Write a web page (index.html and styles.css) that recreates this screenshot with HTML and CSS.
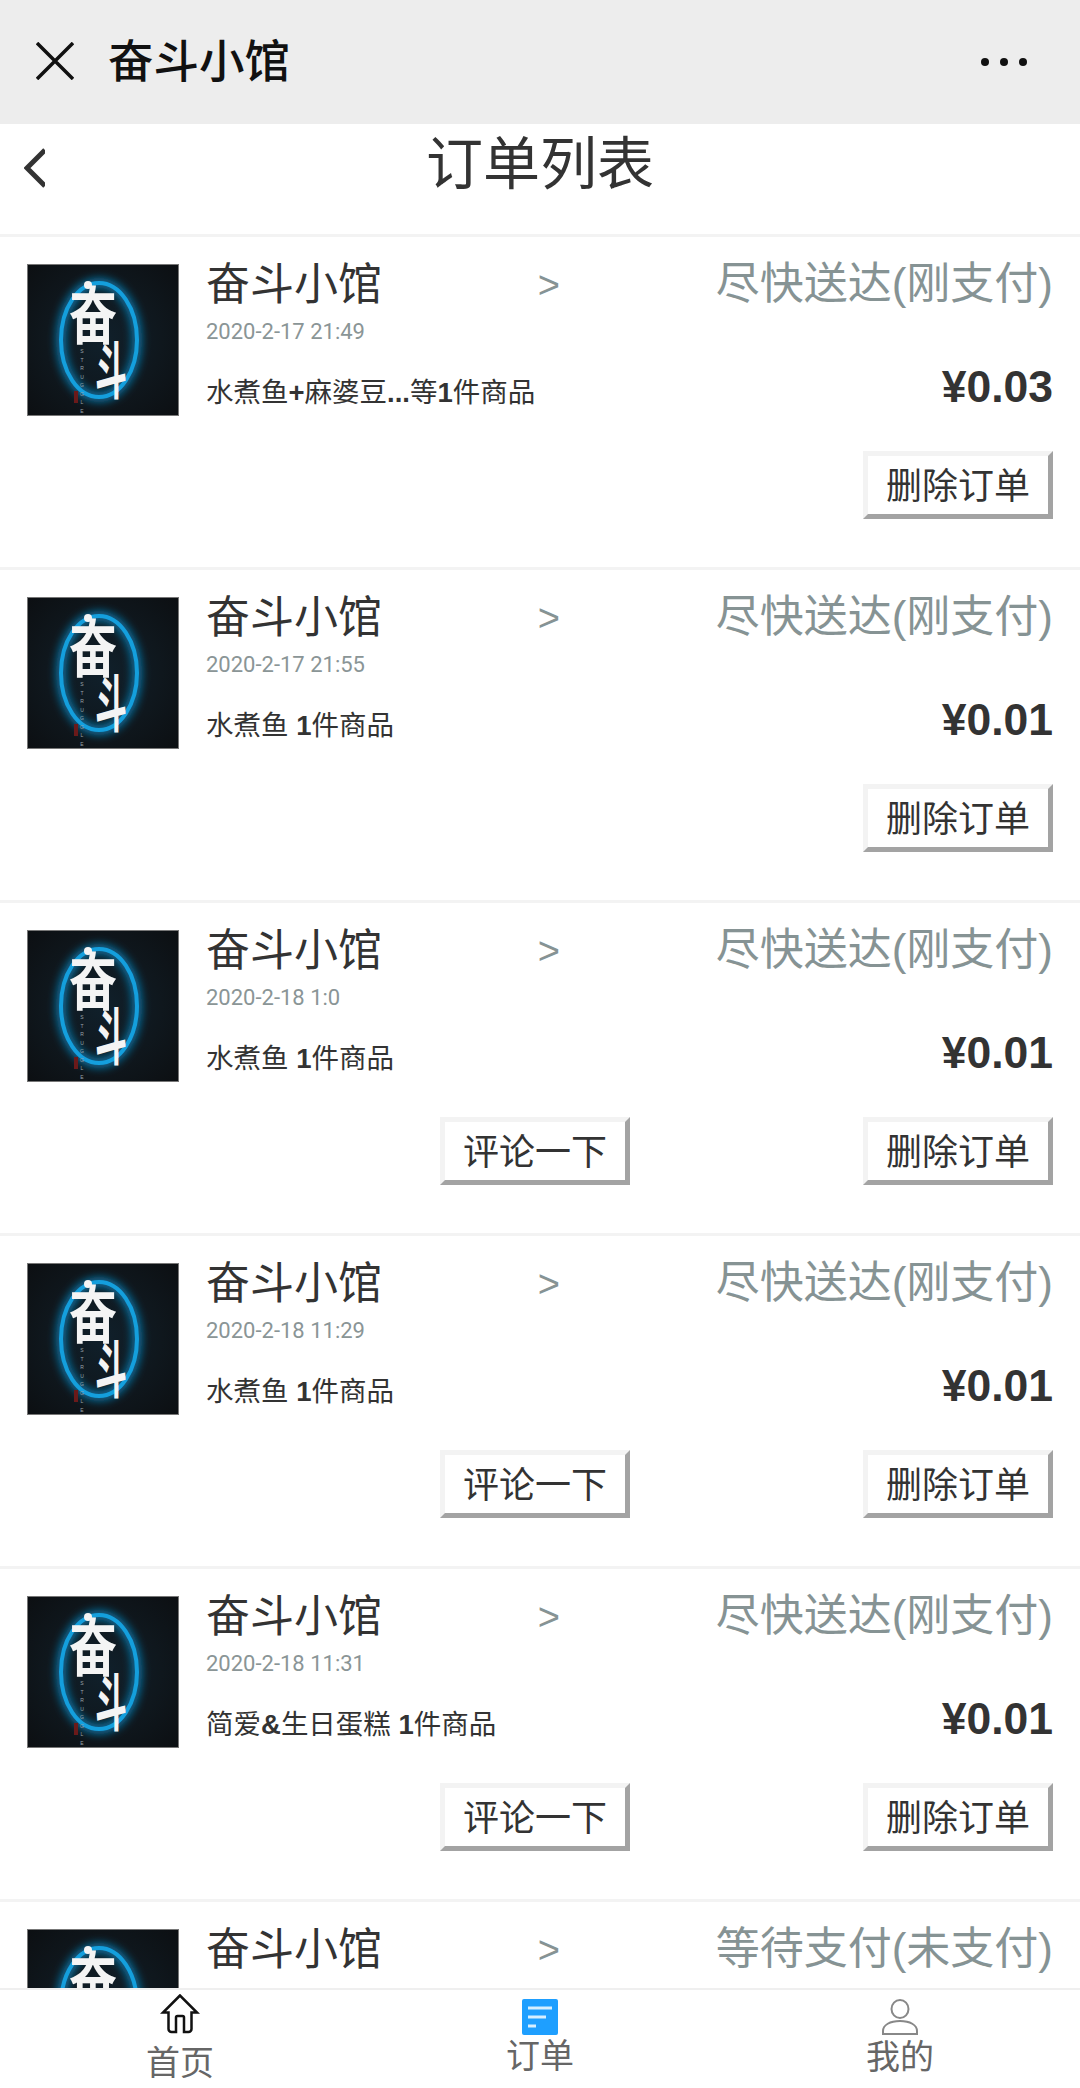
FILE: index.html
```html
<!DOCTYPE html>
<html lang="zh">
<head>
<meta charset="utf-8">
<title>订单列表</title>
<link rel="stylesheet" href="styles.css">
</head>
<body>
<svg class="defs" width="0" height="0" aria-hidden="true">
  <defs>
    <filter id="blur" x="-30%" y="-30%" width="160%" height="160%"><feGaussianBlur stdDeviation="4"/></filter>
    <radialGradient id="vignette" cx="50%" cy="50%" r="70%">
      <stop offset="0%" stop-color="#10202b"/>
      <stop offset="55%" stop-color="#0f171d"/>
      <stop offset="100%" stop-color="#0c0f12"/>
    </radialGradient>
    <symbol id="logo" viewBox="0 0 152 152">
      <rect width="152" height="152" fill="url(#vignette)"/>
      <ellipse cx="72" cy="76" rx="38" ry="57" fill="none" stroke="#0c6f9f" stroke-width="10" filter="url(#blur)"/>
      <ellipse cx="72" cy="76" rx="38" ry="57" fill="none" stroke="#149fdd" stroke-width="4"/>
      <circle cx="61" cy="21" r="4" fill="#f4f4f4"/>
      <text class="logo-a" transform="translate(66 75) scale(1 1.3)">奋</text>
      <text class="logo-b" transform="translate(84 130) scale(.66 1.3)">斗</text>
      <text class="logo-mini" x="55" y="84">STRUGGLE</text>
      <rect x="47" y="127" width="4" height="12" fill="#6a1a1a"/>
    </symbol>
  </defs>
</svg>
<div class="app">
  <header class="topbar">
    <svg class="close" viewBox="0 0 38 38"><path d="M1 1 37 37M37 1 1 37"/></svg>
    <span class="topbar-title">奋斗小馆</span>
    <span class="dots"><i></i><i></i><i></i></span>
  </header>
  <div class="pagehead">
    <svg class="back" viewBox="0 0 21 42"><path d="M21 3 3 21 21 39"/></svg>
    <h1>订单列表</h1>
  </div>
  <main class="list">
    <article class="card">
      <div class="row">
        <svg class="thumb"><use href="#logo"/></svg>
        <div class="info">
          <div class="name"><span>奋斗小馆</span><span class="gt">&gt;</span></div>
          <div class="date">2020-2-17 21:49</div>
          <div class="items">水煮鱼<b>+</b>麻婆豆<b>...</b>等<b>1</b>件商品</div>
        </div>
        <div class="side">
          <div class="status">尽快送达(刚支付)</div>
          <div class="price">¥0.03</div>
        </div>
      </div>
      <div class="actions"><button class="btn">删除订单</button></div>
    </article>
    <article class="card">
      <div class="row">
        <svg class="thumb"><use href="#logo"/></svg>
        <div class="info">
          <div class="name"><span>奋斗小馆</span><span class="gt">&gt;</span></div>
          <div class="date">2020-2-17 21:55</div>
          <div class="items">水煮鱼 <b>1</b>件商品</div>
        </div>
        <div class="side">
          <div class="status">尽快送达(刚支付)</div>
          <div class="price">¥0.01</div>
        </div>
      </div>
      <div class="actions"><button class="btn">删除订单</button></div>
    </article>
    <article class="card">
      <div class="row">
        <svg class="thumb"><use href="#logo"/></svg>
        <div class="info">
          <div class="name"><span>奋斗小馆</span><span class="gt">&gt;</span></div>
          <div class="date">2020-2-18 1:0</div>
          <div class="items">水煮鱼 <b>1</b>件商品</div>
        </div>
        <div class="side">
          <div class="status">尽快送达(刚支付)</div>
          <div class="price">¥0.01</div>
        </div>
      </div>
      <div class="actions"><button class="btn">评论一下</button><button class="btn">删除订单</button></div>
    </article>
    <article class="card">
      <div class="row">
        <svg class="thumb"><use href="#logo"/></svg>
        <div class="info">
          <div class="name"><span>奋斗小馆</span><span class="gt">&gt;</span></div>
          <div class="date">2020-2-18 11:29</div>
          <div class="items">水煮鱼 <b>1</b>件商品</div>
        </div>
        <div class="side">
          <div class="status">尽快送达(刚支付)</div>
          <div class="price">¥0.01</div>
        </div>
      </div>
      <div class="actions"><button class="btn">评论一下</button><button class="btn">删除订单</button></div>
    </article>
    <article class="card">
      <div class="row">
        <svg class="thumb"><use href="#logo"/></svg>
        <div class="info">
          <div class="name"><span>奋斗小馆</span><span class="gt">&gt;</span></div>
          <div class="date">2020-2-18 11:31</div>
          <div class="items">简爱<b>&amp;</b>生日蛋糕 <b>1</b>件商品</div>
        </div>
        <div class="side">
          <div class="status">尽快送达(刚支付)</div>
          <div class="price">¥0.01</div>
        </div>
      </div>
      <div class="actions"><button class="btn">评论一下</button><button class="btn">删除订单</button></div>
    </article>
    <article class="card">
      <div class="row">
        <svg class="thumb"><use href="#logo"/></svg>
        <div class="info">
          <div class="name"><span>奋斗小馆</span><span class="gt">&gt;</span></div>
          <div class="date">2020-4-8 19:3</div>
        </div>
        <div class="side">
          <div class="status">等待支付(未支付)</div>
        </div>
      </div>
    </article>
  </main>
  <nav class="tabbar">
    <a class="tab tab-home">
      <svg class="tab-icon home" viewBox="0 0 40 40"><path d="M20 1.500 3 18.500h5.500v16.500a3 3 0 0 0 3 3H16V23.500a1.500 1.500 0 0 1 1.500-1.500h5a1.500 1.500 0 0 1 1.500 1.500V38h4.500a3 3 0 0 0 3-3V18.500H37Z"/></svg>
      <span>首页</span>
    </a>
    <a class="tab tab-order">
      <svg class="tab-icon doc" viewBox="0 0 36 36"><rect width="36" height="36" rx="2" fill="#1e9fff"/><path d="M6 9h24M6 18h18M6 27h8"/></svg>
      <span>订单</span>
    </a>
    <a class="tab tab-me">
      <svg class="tab-icon me" viewBox="0 0 36 36"><ellipse cx="18" cy="10" rx="8.500" ry="9"/><path d="M1 35v-3c0-6 7-10 17-10s17 4 17 10v3Z"/></svg>
      <span>我的</span>
    </a>
  </nav>
</div>
</body>
</html>
```
FILE: styles.css
```css
* { box-sizing: border-box; }
html, body { margin: 0; padding: 0; background: #fff; }
body {
  font-family: "Liberation Sans", "Noto Sans CJK SC", sans-serif;
  color: #333;
}
.defs { position: absolute; }
.logo-a, .logo-b {
  font-family: "Noto Sans CJK SC", sans-serif;
  font-weight: 700;
  fill: #f4f4f4;
  text-anchor: middle;
}
.logo-a { font-size: 48px; }
.logo-b { font-size: 48px; }
.logo-mini {
  font-family: "Liberation Sans", sans-serif;
  font-size: 5px;
  fill: #9aa4aa;
  writing-mode: vertical-rl;
  text-orientation: upright;
  letter-spacing: 2.500px;
}

.app {
  width: 1080px;
  height: 2088px;
  display: flex;
  flex-direction: column;
  overflow: hidden;
}

.topbar {
  flex: none;
  height: 124px;
  background: #ededed;
  display: flex;
  align-items: center;
  padding: 0 36px;
}
.close {
  width: 38px;
  height: 38px;
  margin-right: 36px;
  margin-top: -2px;
  fill: none;
  stroke: #111;
  stroke-width: 3.500;
}
.topbar-title {
  font-size: 45.500px;
  font-weight: 500;
  color: #111;
  font-family: "Noto Sans CJK SC", sans-serif;
  margin-left: -2px;
  margin-top: -9px;
}
.dots {
  margin-left: auto;
  margin-right: 17px;
  display: flex;
  gap: 11px;
}
.dots i {
  width: 8px;
  height: 8px;
  border-radius: 50%;
  background: #111;
}

.pagehead {
  flex: none;
  height: 113px;
  position: relative;
  border-bottom: 3px solid #f3f3f3;
  display: flex;
  justify-content: center;
}
.pagehead h1 {
  margin: -5px 0 0;
  font-size: 57px;
  font-weight: 400;
  line-height: 80px;
  color: #333;
  font-family: "Noto Sans CJK SC", sans-serif;
}
.back {
  position: absolute;
  left: 24px;
  top: 23px;
  width: 21px;
  height: 42px;
  fill: none;
  stroke: #333;
  stroke-width: 5;
}

.list {
  flex: 1;
  min-height: 0;
  overflow: hidden;
}
.card {
  height: 333px;
  padding: 27px 27px 0;
  border-bottom: 3px solid #f3f3f3;
}
.row {
  display: flex;
  height: 152px;
}
.thumb {
  flex: none;
  width: 152px;
  height: 152px;
  margin-right: 27px;
  outline: 1px solid #777;
  outline-offset: -1px;
}
.info {
  flex: none;
  width: 354px;
}
.name {
  display: flex;
  justify-content: space-between;
  align-items: center;
  height: 44px;
  margin-top: -5px;
  font-size: 44px;
  line-height: 44px;
  color: #333;
  font-family: "Noto Sans CJK SC", sans-serif;
}
.gt {
  font-size: 38px;
  color: #869394;
  font-family: "Liberation Sans", sans-serif;
  margin-top: 8px;
}
.date {
  margin-top: 16px;
  font-size: 22px;
  line-height: 26px;
  color: #8a9596;
  font-family: Roboto, sans-serif;
}
.items {
  margin-top: 30px;
  font-size: 27.500px;
  line-height: 36px;
  color: #333;
}
.items b { font-weight: 700; }
.side {
  flex: 1;
  text-align: right;
}
.status {
  height: 44px;
  margin-top: -2px;
  font-size: 44px;
  line-height: 44px;
  color: #869394;
  white-space: nowrap;
}
.price {
  margin-top: 56px;
  font-size: 44.500px;
  line-height: 50px;
  font-weight: 700;
  color: #333;
}
.actions {
  display: flex;
  justify-content: flex-end;
  gap: 233px;
  margin-top: 35px;
}
.btn {
  width: 190px;
  height: 68px;
  padding: 0 0 5px;
  background: #fff;
  border-style: solid;
  border-width: 5px;
  border-color: #f3f3f3 #a3a3a3 #a3a3a3 #f3f3f3;
  border-radius: 0;
  font-family: "Noto Sans CJK SC", sans-serif;
  font-size: 36px;
  line-height: 50px;
  color: #333;
}

.tabbar {
  flex: none;
  height: 100px;
  background: #fff;
  border-top: 2px solid #efefef;
  display: flex;
}
.tab {
  flex: 1;
  display: flex;
  flex-direction: column;
  align-items: center;
  font-size: 34px;
  line-height: 36px;
  color: #666;
  font-family: "Noto Sans CJK SC", sans-serif;
}
.tab-icon { flex: none; width: 36px; height: 36px; }
.tab-home { padding-top: 4px; }
.tab-home span { margin-top: 9px; }
.tab-order { padding-top: 9px; }
.tab-order span { margin-top: 1px; }
.tab-me { padding-top: 9px; }
.tab-me span { margin-top: 2px; }
.home {
  width: 40px;
  height: 40px;
  fill: none;
  stroke: #111;
  stroke-width: 2.500;
}
.doc path { fill: none; stroke: #d6efff; stroke-width: 3; }
.me { fill: none; stroke: #888; stroke-width: 2; }
```
